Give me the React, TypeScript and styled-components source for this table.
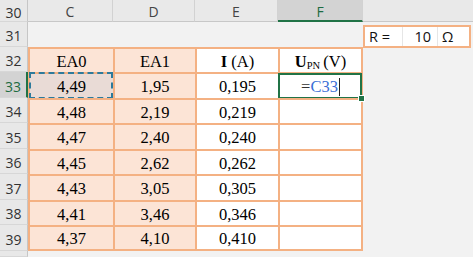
import React from 'react'
import styled, { createGlobalStyle, css } from 'styled-components'

const GlobalStyle = createGlobalStyle`
  html, body {
    margin: 0;
    padding: 0;
    overflow: hidden;
    background: #f2f2f2;
  }
`

const ORANGE = '#f4b183'
const GREEN = '#217346'

const Sheet = styled.div`
  display: grid;
  grid-template-columns: 28px 85px 82px 83px 85px 38px 35px 35px 1fr;
  grid-template-rows: 22px 25px 25px 26px 25px 26px 25px 26px 25px 26px 1fr;
  width: 473px;
  height: 257px;
  background: #f2f2f2;
  font-family: 'Open Sans', 'Liberation Sans', sans-serif;
`

const RowHead = styled.div<{ $active?: boolean }>`
  grid-column: 1;
  display: flex;
  align-items: center;
  justify-content: center;
  padding-top: 3px;
  box-sizing: border-box;
  font-size: 14px;
  color: #333;
  background: #e8e8e8;
  border-right: 1px solid #c6c6c6;
  border-bottom: 1px solid #d7d7d7;
  ${(p) =>
    p.$active &&
    css`
      background: #d3d3d3;
      color: #1d6b41;
      border-right: 2px solid ${GREEN};
    `}
`

const ColHead = styled.div<{ $active?: boolean }>`
  display: flex;
  align-items: center;
  justify-content: center;
  padding-top: 2px;
  box-sizing: border-box;
  font-size: 14px;
  color: #444;
  background: #e9e9e9;
  border-right: 1px solid #d2d2d2;
  border-bottom: 1px solid #c8c8c8;
  ${(p) =>
    p.$active &&
    css`
      background: #d3d3d3;
      color: #1d6b41;
      border-bottom: 2px solid ${GREEN};
    `}
`

const HeadFill = styled.div`
  grid-column: 6 / -1;
  background: #e9e9e9;
  border-bottom: 1px solid #c8c8c8;
`

const RBox = styled.div`
  grid-column: 6 / 9;
  align-self: end;
  height: 23px;
  margin-bottom: -1px;
  display: grid;
  grid-template-columns: 37px 35px 1fr;
  box-sizing: border-box;
  border: 2px solid ${ORANGE};
  background: #fff;
  font-size: 14.5px;
  color: #111;
`

const RCell = styled.div<{ $align?: 'left' | 'right'; $divided?: boolean }>`
  display: flex;
  align-items: center;
  justify-content: ${(p) => (p.$align === 'right' ? 'flex-end' : 'flex-start')};
  padding: 0 6px 0 4px;
  border-left: ${(p) => (p.$divided ? '1px solid #e6e6e6' : 'none')};
`

type Kind = 'peach' | 'white' | 'ref'

const fills: Record<Kind, string> = {
  peach: '#fce4d6',
  white: '#ffffff',
  ref: '#e9dbd6',
}

const DataCell = styled.div<{ $kind: Kind; $lastCol?: boolean; $lastRow?: boolean; $active?: boolean }>`
  position: relative;
  display: flex;
  align-items: center;
  justify-content: center;
  padding-top: 2px;
  box-sizing: border-box;
  background: ${(p) => fills[p.$kind]};
  border-left: 2px solid ${ORANGE};
  border-top: 2px solid ${ORANGE};
  border-right: ${(p) => (p.$lastCol ? `2px solid ${ORANGE}` : 'none')};
  border-bottom: ${(p) => (p.$lastRow ? `2px solid ${ORANGE}` : 'none')};
  font-family: 'Liberation Serif', 'Times New Roman', serif;
  font-size: 16.5px;
  color: #000;
  ${(p) =>
    p.$kind === 'ref' &&
    css`
      &::after {
        content: '';
        position: absolute;
        inset: -2px 0 -1px -1px;
        border: 2px dashed #2c7a9c;
      }
    `}
  ${(p) =>
    p.$active &&
    css`
      &::after {
        content: '';
        position: absolute;
        inset: -1px -1px -1px -2px;
        border: 2px solid ${GREEN};
      }
      &::before {
        content: '';
        position: absolute;
        right: -4px;
        bottom: -4px;
        width: 5px;
        height: 5px;
        background: ${GREEN};
        border: 1px solid #fff;
        z-index: 2;
      }
    `}
`

const Bold = styled.b`
  font-weight: bold;
`

const Sub = styled.sub`
  font-size: 10.5px;
  vertical-align: -2px;
  margin-right: 3px;
`

const Formula = styled.span`
  display: inline-flex;
  align-items: center;
  color: #333;
`

const Ref = styled.span`
  color: #3b6fd6;
`

const Caret = styled.span`
  display: inline-block;
  width: 1px;
  height: 18px;
  margin-left: 1px;
  background: #222;
`

const rows: [string, string, string][] = [
  ['4,49', '1,95', '0,195'],
  ['4,48', '2,19', '0,219'],
  ['4,47', '2,40', '0,240'],
  ['4,45', '2,62', '0,262'],
  ['4,43', '3,05', '0,305'],
  ['4,41', '3,46', '0,346'],
  ['4,37', '4,10', '0,410'],
]

const App = () => {
  return (
    <>
      <GlobalStyle />
      <Sheet>
        <RowHead>30</RowHead>
        <ColHead>C</ColHead>
        <ColHead>D</ColHead>
        <ColHead>E</ColHead>
        <ColHead $active>F</ColHead>
        <HeadFill />

        <RowHead>31</RowHead>
        <RBox>
          <RCell>R =</RCell>
          <RCell $align="right" $divided>
            10
          </RCell>
          <RCell $divided>Ω</RCell>
        </RBox>

        <RowHead>32</RowHead>
        <DataCell $kind="peach">EA0</DataCell>
        <DataCell $kind="peach">EA1</DataCell>
        <DataCell $kind="white">
          <span>
            <Bold>I</Bold> (A)
          </span>
        </DataCell>
        <DataCell $kind="white" $lastCol>
          <span>
            <Bold>U</Bold>
            <Sub>PN</Sub>(V)
          </span>
        </DataCell>

        {rows.map(([c, d, e], i) => {
          const rowNo = 33 + i
          const last = i === rows.length - 1
          return (
            <React.Fragment key={rowNo}>
              <RowHead $active={i === 0}>{rowNo}</RowHead>
              <DataCell $kind={i === 0 ? 'ref' : 'peach'} $lastRow={last}>
                {c}
              </DataCell>
              <DataCell $kind="peach" $lastRow={last}>
                {d}
              </DataCell>
              <DataCell $kind="white" $lastRow={last}>
                {e}
              </DataCell>
              <DataCell $kind="white" $lastCol $lastRow={last} $active={i === 0}>
                {i === 0 && (
                  <Formula>
                    =<Ref>C33</Ref>
                    <Caret />
                  </Formula>
                )}
              </DataCell>
            </React.Fragment>
          )
        })}

        <RowHead />
      </Sheet>
    </>
  )
}

export default App
